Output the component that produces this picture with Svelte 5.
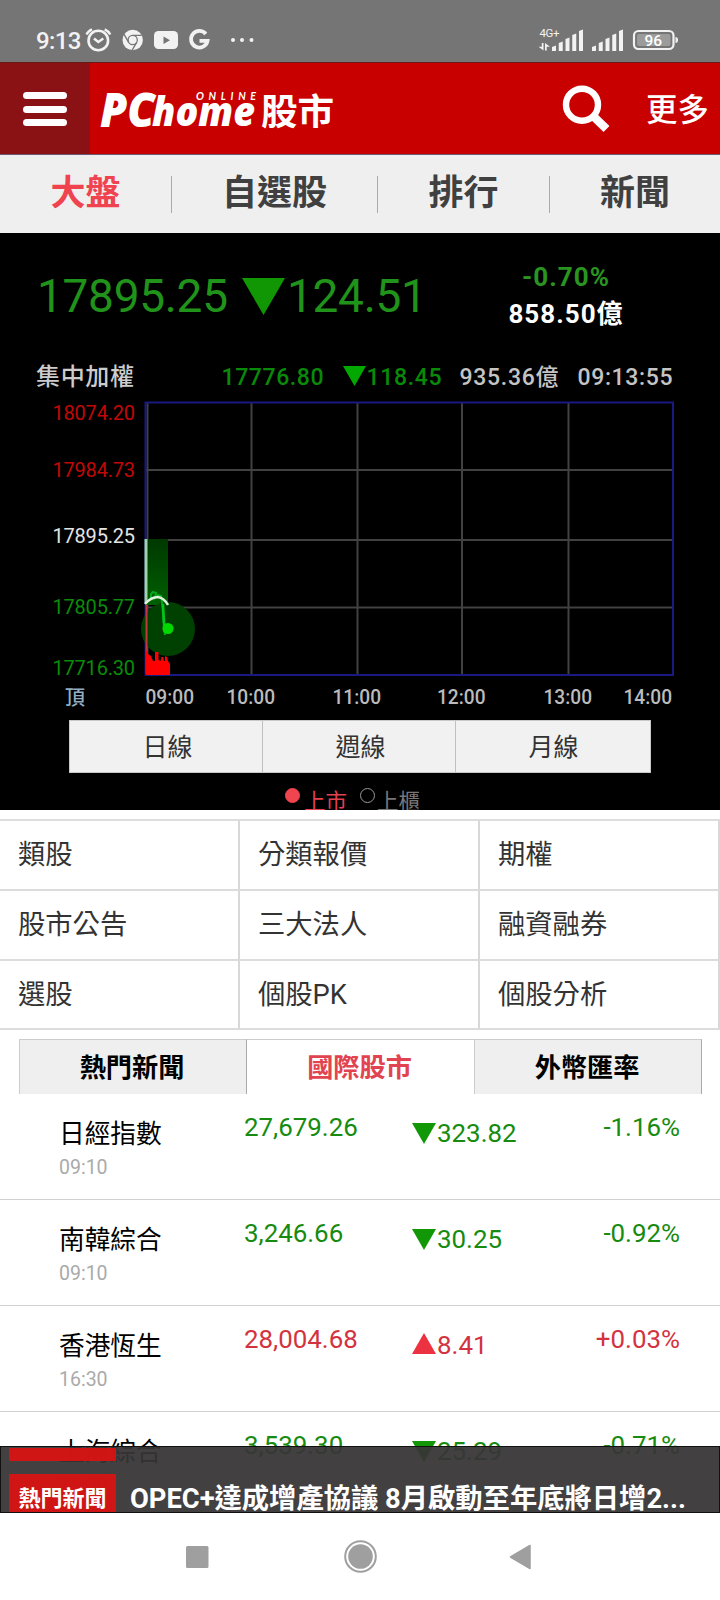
<script lang="ts">
  interface Quote {
    name: string;
    time: string;
    price: string;
    change: string;
    percent: string;
    up?: boolean;
  }

  const navItems = ['大盤', '自選股', '排行', '新聞'];
  const periods = ['日線', '週線', '月線'];
  const links = ['類股', '分類報價', '期權', '股市公告', '三大法人', '融資融券', '選股', '個股PK', '個股分析'];
  const tabs = ['熱門新聞', '國際股市', '外幣匯率'];

  const quotes: Quote[] = [
    { name: '日經指數', time: '09:10', price: '27,679.26', change: '323.82', percent: '-1.16%' },
    { name: '南韓綜合', time: '09:10', price: '3,246.66', change: '30.25', percent: '-0.92%' },
    { name: '香港恆生', time: '16:30', price: '28,004.68', change: '8.41', percent: '+0.03%', up: true },
    { name: '上海綜合', time: '15:30', price: '3,539.30', change: '25.29', percent: '-0.71%' }
  ];

  // Chart axes, in the chart's own coordinates
  const levels = [
    { label: '18074.20', y: 68, color: '#c00808' },
    { label: '17984.73', y: 125, color: '#c00808' },
    { label: '17895.25', y: 191, color: '#e4e4e4' },
    { label: '17805.77', y: 262, color: '#0a8c0a' },
    { label: '17716.30', y: 322.5, color: '#0a8c0a' }
  ];
  const hours = [
    { label: '09:00', x: 145.5 },
    { label: '10:00', x: 226.5 },
    { label: '11:00', x: 332.5 },
    { label: '12:00', x: 437 },
    { label: '13:00', x: 543.5 },
    { label: '14:00', x: 623.5 }
  ];
  const gridX = [251.5, 357.5, 462, 568.5];
  const gridY = [118, 188, 255.5];

  let activeNav = $state(0);
  let activeTab = $state(1);
  let market = $state(0);
</script>

<div class="phone">
  <div class="status-bar">
    <span class="clock">9:13</span>
    <svg class="status-icons" width="180" height="62" viewBox="84 0 180 62" fill="none" aria-hidden="true">
      <!-- alarm -->
      <circle cx="98.300" cy="40.500" r="9.800" stroke="#f2f2f2" stroke-width="2.600" />
      <path d="M86.500 34.500Q88 31 92 29.300M110.300 34.500Q108.500 31 104.700 29.300" stroke="#f2f2f2" stroke-width="2.400" />
      <path d="M94 38.500l4.300 3.500 5-3.500" stroke="#f2f2f2" stroke-width="2.400" />
      <!-- chrome -->
      <circle cx="132.700" cy="40" r="10.200" fill="#f2f2f2" />
      <circle cx="132.700" cy="40" r="4.600" stroke="#757575" stroke-width="1.300" />
      <path d="M132.700 35.400h9M128.700 42.300l-4.800-8.200M136.700 42.300l-4.700 8" stroke="#757575" stroke-width="1.300" />
      <!-- youtube -->
      <rect x="154" y="31" width="24" height="18" rx="4.500" fill="#f2f2f2" />
      <path d="M163.500 36.500v7.500l6.500-3.700z" fill="#757575" />
      <!-- google -->
      <path d="M205.800 34A8.300 8.300 0 1 0 207.500 40.800H199.500" stroke="#f2f2f2" stroke-width="3.800" />
      <circle cx="233" cy="40" r="2" fill="#f2f2f2" />
      <circle cx="242" cy="40" r="2" fill="#f2f2f2" />
      <circle cx="251.500" cy="40" r="2" fill="#f2f2f2" />
    </svg>
    <svg class="status-right" width="150" height="62" viewBox="535 0 150 62" aria-hidden="true">
      <text x="539.500" y="37" font-size="11.500" fill="#f2f2f2" textLength="20">4G+</text>
      <path d="M543.500 43v7.500l-5-3.800h3.300V43zM545 50.500V43l5 3.800h-3.300v3.700z" fill="#f2f2f2" />
      <g fill="#f2f2f2">
        {#each [552, 592] as start}
          {#each [46, 42, 38, 34, 30] as top, i}
            <path d="M{start + i * 6.75} {top + 1}l4-1.500V51h-4z" />
          {/each}
        {/each}
      </g>
      <rect x="634" y="31" width="39.500" height="18" rx="4.500" fill="none" stroke="#f2f2f2" stroke-width="2.200" />
      <rect x="637" y="34" width="33.500" height="12" rx="2" fill="#9b9b9b" />
      <path d="M675.500 37q2.500 0 2.500 3t-2.500 3z" fill="#f2f2f2" />
      <text x="644.500" y="45.800" font-size="15.500" font-weight="500" fill="#fff" textLength="17.500">96</text>
    </svg>
  </div>

  <header class="header">
    <button class="menu" aria-label="選單">
      <span></span>
      <span></span>
      <span></span>
    </button>
    <svg class="logo" width="250" height="92" viewBox="94 62 250 92">
      <g class="logo-latin" fill="#fff">
        <text x="100" y="126.500" font-size="47" textLength="55" lengthAdjust="spacingAndGlyphs">PC</text>
        <text x="152" y="126" font-size="41" textLength="103" lengthAdjust="spacingAndGlyphs">home</text>
      </g>
      <text class="logo-online" x="196" y="99.500" font-size="10.500" textLength="60" fill="#fff">ONLINE</text>
      <text class="logo-cjk" x="261" y="125" font-size="36.500" textLength="73" fill="#fff">股市</text>
    </svg>
    <svg class="search" width="56" height="60" viewBox="558 78 56 60" fill="none" aria-hidden="true">
      <circle cx="582" cy="104.700" r="16" stroke="#fff" stroke-width="6.400" />
      <path d="M591.500 114.500L606.500 129" stroke="#fff" stroke-width="8.500" />
    </svg>
    <span class="more">更多</span>
  </header>

  <nav class="nav">
    {#each navItems as item, i}
      <button class="nav-item" class:active={activeNav === i} onclick={() => (activeNav = i)}>{item}</button>
    {/each}
  </nav>

  <section class="market">
    <div class="summary">
      <span class="index">17895.25</span>
      <i class="big-down"></i>
      <span class="index diff">124.51</span>
      <div class="volume">
        <span class="pct">-0.70%</span>
        <span>858.50億</span>
      </div>
    </div>

    <svg class="chart" width="720" height="368" viewBox="0 0 720 368">
      <defs>
        <linearGradient id="fall" x1="0" y1="0" x2="0" y2="1">
          <stop offset="0" stop-color="#003800" />
          <stop offset="1" stop-color="#006000" />
        </linearGradient>
      </defs>

      <g font-size="23" font-weight="500">
        <text x="36" y="33" font-size="24" textLength="98" fill="#ccc">集中加權</text>
        <text x="221.500" y="33" textLength="102" fill="#098a09">17776.80</text>
        <path d="M343 14h23l-11.500 20z" fill="#00a800" />
        <text x="366.500" y="33" textLength="75" fill="#098a09">118.45</text>
        <text x="459.500" y="33" textLength="99" fill="#c4c4c4">935.36億</text>
        <text x="577.500" y="33" textLength="95" fill="#c4c4c4">09:13:55</text>
      </g>

      <g stroke="#414141" stroke-width="2">
        <path d="M147.500 50V323" />
        {#each gridX as x}
          <path d="M{x} 50V323" />
        {/each}
        {#each gridY as y}
          <path d="M146 {y}H672" />
        {/each}
      </g>
      <rect x="145.500" y="50.500" width="527.500" height="272.500" fill="none" stroke="#191982" stroke-width="2" />

      <!-- Drop from the previous close, with the last tick marked -->
      <rect x="146" y="187" width="22" height="66" fill="url(#fall)" />
      <circle cx="168" cy="277" r="27" fill="#004000" />
      <path d="M146.500 253V322" stroke="#c4383c" stroke-width="2" />
      <path d="M146 323V299h2v3l3 2 2 5h2v-9h3.500v8l2 1 1-4h1.500l1 4h1v-5l2 1 1 4 2 3v11z" fill="#f00" />
      <path d="M151 247v-5l2-2 3 1-1 5 3-3 3 1 1 6 1 12 1 15 1 6" fill="none" stroke="#00a91c" stroke-width="2" />
      <path d="M163 252l1 18 2 9" fill="none" stroke="#00c818" stroke-width="2.500" />
      <circle cx="168" cy="276.500" r="5.500" fill="#00d800" />
      <path d="M146 187V251" stroke="#9fd3ab" stroke-width="3" />
      <path d="M145 252Q151 245 158 245Q164 246 168 253" fill="none" stroke="#dcf2dc" stroke-width="2.500" />

      <g font-size="20">
        {#each levels as level}
          <text x="52.500" y={level.y} textLength="82.500" fill={level.color}>{level.label}</text>
        {/each}
      </g>
      <g font-size="20" fill="#bbb" font-weight="500">
        {#each hours as hour}
          <text x={hour.x} y="351.500" textLength="48.500" lengthAdjust="spacingAndGlyphs">{hour.label}</text>
        {/each}
      </g>
      <text x="65" y="352.500" font-size="20" font-weight="500" fill="#8fadc4">頂</text>
    </svg>

    <div class="periods">
      {#each periods as period}
        <button class="period">{period}</button>
      {/each}
    </div>

    <div class="markets">
      {#each ['上市', '上櫃'] as label, i}
        <button class="market-option" class:chosen={market === i} onclick={() => (market = i)}>
          <i class="radio"></i>
          <span>{label}</span>
        </button>
      {/each}
    </div>
  </section>

  <section class="links">
    {#each links as link}
      <span class="link">{link}</span>
    {/each}
  </section>

  <div class="tabs">
    {#each tabs as tab, i}
      <button class="tab" class:active={activeTab === i} onclick={() => (activeTab = i)}>{tab}</button>
    {/each}
  </div>

  <section class="quotes">
    {#each quotes as quote}
      <div class="quote" class:up={quote.up}>
        <div class="quote-name">
          <span class="name">{quote.name}</span>
          <span class="time">{quote.time}</span>
        </div>
        <span class="price">{quote.price}</span>
        <span class="change"><i class="arrow"></i>{quote.change}</span>
        <span class="percent">{quote.percent}</span>
      </div>
    {/each}
  </section>

  <!-- Translucent news ticker over the list -->
  <div class="ticker">
    <div class="ticker-prev"><i></i></div>
    <div class="ticker-row">
      <span class="ticker-tag">熱門新聞</span>
      <span class="ticker-title">OPEC+達成增產協議 8月啟動至年底將日增2...</span>
    </div>
  </div>

  <div class="system-nav">
    <svg width="720" height="87" viewBox="0 0 720 87" aria-hidden="true">
      <rect x="186" y="33" width="22.500" height="22" rx="1.500" fill="#9f9f9f" />
      <circle cx="360.500" cy="43.500" r="15.300" fill="none" stroke="#9f9f9f" stroke-width="2" />
      <circle cx="360.500" cy="43.500" r="12.300" fill="#9f9f9f" />
      <path d="M530 32.500V55.500L510.500 44z" fill="#9f9f9f" stroke="#9f9f9f" stroke-width="1.500" stroke-linejoin="round" />
    </svg>
  </div>
</div>

<style>
  :global(body) {
    margin: 0;
    background: #fff;
  }

  .phone {
    position: relative;
    width: 720px;
    height: 1600px;
    overflow: hidden;
    background: #fff;
    font-family: Roboto, 'Noto Sans CJK TC', sans-serif;
    color: #333;
  }

  svg {
    display: block;
    flex: none;
  }

  button {
    margin: 0;
    padding: 0;
    border: 0;
    background: none;
    font: inherit;
    color: inherit;
  }

  .status-bar {
    display: flex;
    box-sizing: border-box;
    height: 62px;
    padding-left: 36px;
    background: #757575;
    color: #f2f2f2;
  }

  .clock {
    width: 48px;
    padding-top: 27px;
    font-size: 24px;
    line-height: 28px;
    font-weight: 500;
    letter-spacing: -0.6px;
  }

  .status-right {
    margin-left: auto;
    margin-right: 35px;
  }

  .header {
    display: flex;
    box-sizing: border-box;
    height: 93px;
    background: #c90000;
    border-top: 1px solid #6b1a1a;
    border-bottom: 1px solid #6b5a74;
  }

  .menu {
    display: flex;
    flex-direction: column;
    align-items: center;
    gap: 6.5px;
    width: 90px;
    padding-top: 29px;
    background: #8a1114;
  }

  .menu span {
    width: 44px;
    height: 7px;
    border-radius: 3.5px;
    background: #fff;
  }

  .logo {
    margin: -1px 0 0 4px;
  }

  .logo-latin {
    font-family: 'Open Sans', sans-serif;
    font-weight: 800;
    font-style: italic;
  }

  .logo-online {
    font-family: Lato, sans-serif;
    font-weight: 700;
    font-style: italic;
  }

  .logo-cjk {
    font-weight: 700;
  }

  .search {
    margin: 15px 0 0 214px;
  }

  .more {
    margin: 26px 0 0 32px;
    font-size: 31.5px;
    line-height: 44px;
    font-weight: 500;
    color: #fff;
    white-space: nowrap;
  }

  .nav {
    display: grid;
    grid-template-columns: 172px 206px 172px 170px;
    height: 78px;
    background: #efefef;
  }

  .nav-item {
    display: flex;
    align-items: center;
    justify-content: center;
    height: 37px;
    margin-top: 21px;
    border-right: 1px solid #aaa;
    font-size: 35px;
    line-height: 37px;
    font-weight: 700;
    color: #404040;
    padding-bottom: 2px;
    box-sizing: border-box;
  }

  .nav-item:last-child {
    border-right: 0;
  }

  .nav-item.active {
    color: #ef4350;
  }

  .market {
    height: 577px;
    overflow: hidden;
    background: #000;
  }

  .summary {
    display: flex;
    height: 119px;
    padding-left: 37px;
  }

  .index {
    width: 205px;
    margin-top: 36px;
    font-size: 46px;
    line-height: 54px;
    letter-spacing: -0.3px;
    color: #20931a;
  }

  .diff {
    width: 170px;
    padding-left: 2px;
  }

  .big-down {
    width: 43px;
    height: 37px;
    margin-top: 45px;
    background: #119604;
    clip-path: polygon(0 0, 100% 0, 50% 100%);
  }

  .volume {
    display: flex;
    flex-direction: column;
    align-items: center;
    width: 218px;
    padding-top: 26px;
    font-size: 26px;
    line-height: 37px;
    font-weight: 700;
    letter-spacing: 1px;
    color: #fff;
  }

  .pct {
    color: #2a9420;
  }

  .chart text {
    font-family: Roboto, 'Noto Sans CJK TC', sans-serif;
  }

  .periods {
    display: grid;
    grid-template-columns: 193px 193px 194px;
    box-sizing: border-box;
    width: 582px;
    height: 53px;
    margin-left: 69px;
    border: 1px solid #c8c8c8;
    background: #f1f1f1;
  }

  .period {
    border-right: 1px solid #c0c0c0;
    padding: 2px 0 0 3px;
    font-size: 25px;
    line-height: 36px;
  }

  .period:last-child {
    border-right: 0;
    padding-left: 1px;
  }

  .markets {
    display: flex;
    gap: 13px;
    padding: 15px 0 0 285px;
  }

  .market-option {
    display: flex;
    font-size: 21.5px;
    line-height: 30px;
    color: #777;
  }

  .market-option span {
    margin: -1px 0 0 4px;
  }

  .market-option:last-child span {
    margin-left: 2px;
  }

  .radio {
    box-sizing: border-box;
    width: 15px;
    height: 15px;
    border: 1px solid #999;
    border-radius: 50%;
  }

  .chosen {
    color: #e3414d;
  }

  .chosen .radio {
    border-color: #f0444f;
    background: #f0444f;
  }

  .links {
    display: grid;
    grid-template-columns: repeat(3, 240px);
    grid-template-rows: 70px 70px 69px;
    margin-top: 9px;
    border-top: 2px solid #ddd;
  }

  .link {
    box-sizing: border-box;
    padding: 15px 0 0 18px;
    border-right: 2px solid #d8d8d8;
    border-bottom: 2px solid #dcdcdc;
    font-size: 27.3px;
    line-height: 39px;
  }

  .tabs {
    display: grid;
    grid-template-columns: 228px 227px 228px;
    width: 683px;
    height: 55px;
    margin: 9px 0 0 19px;
  }

  .tab {
    box-sizing: border-box;
    border: 1px solid #ccc;
    border-bottom: 0;
    border-right-color: #aaa;
    padding: 2px 2px 0 0;
    background: #efefef;
    font-size: 26.2px;
    line-height: 38px;
    font-weight: 700;
    color: #000;
  }

  .tab.active {
    border-left: 0;
    border-right: 0;
    background: #fff;
    color: #e14450;
  }

  .quote {
    display: flex;
    box-sizing: border-box;
    height: 106px;
    padding: 17px 40px 0 59px;
    border-bottom: 1px solid #d0d0d0;
    font-size: 25.9px;
    line-height: 32px;
    color: #168b10;
  }

  .quote-name {
    display: flex;
    flex-direction: column;
    width: 185px;
  }

  .name {
    padding-top: 5px;
    font-size: 25.7px;
    line-height: 36px;
    color: #000;
  }

  .time {
    padding-top: 1px;
    font-size: 19.5px;
    line-height: 29px;
    color: #aaa;
  }

  .price {
    width: 168px;
  }

  .change {
    display: flex;
    padding-top: 6px;
  }

  .arrow {
    width: 24px;
    height: 21px;
    margin: 6px 1px 0 0;
    background: #129706;
    clip-path: polygon(0 0, 100% 0, 50% 100%);
  }

  .percent {
    margin-left: auto;
  }

  .quote.up {
    color: #d33340;
  }

  .up .arrow {
    margin-top: 4px;
    background: #ec3241;
    clip-path: polygon(50% 0, 100% 100%, 0 100%);
  }

  .ticker {
    position: absolute;
    left: 0;
    top: 1446px;
    box-sizing: border-box;
    width: 720px;
    height: 67px;
    border: 1px solid #111;
    background: rgba(54, 52, 53, 0.94);
    overflow: hidden;
  }

  .ticker-prev {
    height: 27px;
    padding: 1px 8px 0;
    box-sizing: border-box;
  }

  .ticker-prev i {
    display: block;
    width: 107px;
    height: 13px;
    background: rgba(217, 18, 18, 0.94);
  }

  .ticker-row {
    display: flex;
    padding-left: 8px;
  }

  .ticker-tag {
    box-sizing: border-box;
    width: 107px;
    height: 40px;
    padding-top: 9px;
    background: rgba(217, 18, 18, 0.94);
    font-size: 22px;
    line-height: 32px;
    font-weight: 700;
    text-align: center;
    color: #fff;
  }

  .ticker-title {
    padding: 5px 0 0 14px;
    font-size: 27.3px;
    line-height: 40px;
    font-weight: 700;
    white-space: nowrap;
    color: #fff;
  }

  .system-nav {
    position: absolute;
    left: 0;
    top: 1513px;
    background: #fff;
  }
</style>
